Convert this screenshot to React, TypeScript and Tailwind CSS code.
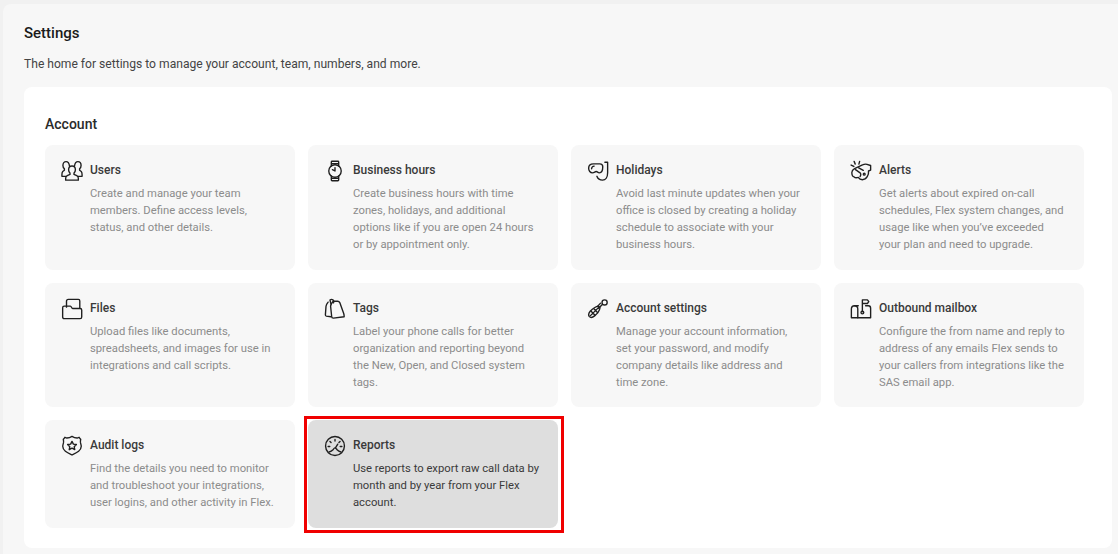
import React from 'react';

const iconClass = 'w-[22px] h-[22px] shrink-0 mt-[-1px] text-[#1f1f1f]';

const Svg: React.FC<{ children: React.ReactNode }> = ({ children }) => (
  <svg viewBox="0 0 24 24" fill="none" stroke="currentColor" strokeWidth={1.5} strokeLinecap="round" strokeLinejoin="round" className={iconClass}>
    {children}
  </svg>
);

const UsersIcon = () => (
  <Svg>
    <path d="M12 6.500c2.300 0 3.700 1.900 3.700 4.200 0 1.500-.6 2.800-1.500 3.600v1.400l3 1.300c1.200.6 1.700 1.500 1.700 2.800v2.200H5.100v-2.200c0-1.300.5-2.200 1.700-2.800l3-1.300v-1.400c-.9-.8-1.500-2.100-1.500-3.600 0-2.200 1.400-4.200 3.700-4.200z" />
    <path d="M9.300 6.800C9 4 7.500 1.800 5.500 1.800 3.500 1.800 2.100 3.700 2.100 6c0 1.500.6 2.800 1.600 3.600v1.500l-1.800 1.400C1.200 13.200 1 14.500 1 16v1.800h4.300" />
    <path d="M14.700 6.800C15 4 16.500 1.800 18.500 1.800c2 0 3.400 1.900 3.400 4.200 0 1.500-.6 2.800-1.600 3.600v1.500l1.800 1.400c.7.700.9 2 .9 3.500v1.800h-4.300" />
  </Svg>
);

const WatchIcon = () => (
  <Svg>
    <circle cx="12" cy="12" r="6.800" />
    <path d="M12 8.300V12l-2.800-1.500" />
    <path d="M8 6.500V2.200c0-.5.400-.8.800-.8h6.400c.4 0 .8.300.8.800v4.300" />
    <path d="M8 17.500v4.300c0 .5.400.8.800.8h6.400c.4 0 .8-.300.8-.800v-4.300" />
    <path d="M8.200 4h7.600M8.200 20h7.600" />
  </Svg>
);

const SnorkelIcon = () => (
  <Svg>
    <path d="M1.800 9c0-3 2.200-4.800 5.200-4.800h7c2 0 3.200 1 3.200 3.200 0 3.400-1.200 6.600-3.800 6.600-1.600 0-2-1.400-3.400-1.400s-2 1.400-4 1.400C3.500 14 1.800 11.800 1.800 9z" />
    <path d="M5 9.500c.1-1.600 1.200-2.700 2.800-2.800" />
    <path d="M19.500 2.500h3V14c0 4.500-2.200 8-5.500 8-2.700 0-5.200-1.500-6.200-4.200" />
  </Svg>
);

const WhistleIcon = () => (
  <Svg>
    <path d="M4.500 1.500l1.200 3M10.500 1.500l-.8 3M1.200 5.500l3 1.500" />
    <path d="M2 13.500c0-2 1.300-3 3-4l8-4c2-.8 4-1.200 5.500-.8L22.500 6v5l-2.300 1c.5 4-2 9.500-6.700 9.500-2 0-3.500-1-4.500-2.500-2 .5-3.500.5-4.500-.5C2.800 18 2 15.800 2 13.500z" />
    <path d="M6 10.500l5 3.500c1 .8 1 2.800 0 4M9.500 8.500l5 2.800" />
    <circle cx="15.500" cy="15.500" r="1" />
  </Svg>
);

const FilesIcon = () => (
  <Svg>
    <path d="M6 10V3.500c0-1.200.8-2 2-2h11c1 0 1.500.7 1.500 1.700V11" />
    <path d="M1.800 10.500c0-1 .7-1.700 1.700-1.700h6.700c1.200 0 1.300 2.700 2.500 2.700h8.200c1 0 1.700.7 1.700 1.700v7.600c0 1-.7 1.700-1.700 1.700H3.500c-1 0-1.700-.7-1.700-1.700z" />
  </Svg>
);

const TagsIcon = () => (
  <Svg>
    <path d="M10 3.500h5c1 0 1.700.5 2.200 1.500l4.300 12c.4 1.200.5 2.700.5 3.500l-11.800 1.500c-1 0-1.800-.6-1.800-1.500L7.200 9c0-1.500 1-3.500 2.800-5.500z" />
    <path d="M7.500 6L6.500 2.200c1-.8 2.200-.9 3.200-.2 1 .7 1.200 2 .6 3.300" />
    <path d="M7.500 20.500l-5-.7c-.6-.1-1-.7-1-1.400L2.200 9c.2-1.600 1.200-3.200 2.300-4.500" />
  </Svg>
);

const WhiskIcon = () => (
  <Svg>
    <circle cx="19.200" cy="4.800" r="2.800" />
    <path d="M17 6.800l-4.300 4.300M14.800 5.600L11.200 9.400" />
    <path d="M12.500 8.800c-3.200.4-6.200 2.600-9 5.700-1.700 2-2.100 4.300-.9 5.800 1.300 1.400 3.600 1 5.700-.8 3-2.600 5.500-5.700 5.900-8.900z" />
    <path d="M4.500 14.500l4 4M7.500 11.800l4.200 4.200M3.500 19.500l9-9" />
  </Svg>
);

const MailboxIcon = () => (
  <Svg>
    <path d="M1.500 21.500V12c0-2 1.600-3.500 3.500-3.500S8.500 10 8.500 12v9.500z" />
    <path d="M5 8.500h4M17 8.500h3c1.500 0 2.500 1.200 2.500 2.800v10.200H8.500" />
    <path d="M13.500 15V2h5.500l1.500 2-1.500 2h-5.500" />
    <circle cx="13.500" cy="15.800" r="1.500" />
  </Svg>
);

const BadgeIcon = () => (
  <Svg>
    <path d="M12 1.500c1.800 1.200 3.500 1.800 5.500 1.800l2.200-.8c.5 1 1 1.700 1.800 2.300-.4 1.500-.5 2.500-.2 3.800.4 1.500.8 2.700.8 3.800 0 4.500-4.500 6.600-10.100 9.300C6.400 19 1.900 16.900 1.900 12.400c0-1.100.4-2.300.8-3.800.3-1.300.2-2.300-.2-3.800.8-.6 1.300-1.300 1.800-2.300l2.200.8c2 0 3.700-.6 5.500-1.800z" />
    <path d="M12 7l1.500 3 3.300.4-2.400 2.300.6 3.300-3-1.600-3 1.600.6-3.300-2.400-2.300 3.300-.4z" />
  </Svg>
);

const GaugeIcon = () => (
  <Svg>
    <circle cx="12" cy="12" r="10.300" />
    <path d="M12 4.800v1.800M6.500 7l1.200 1.200M17.500 7l-1.200 1.200M4.500 12.500h1.800M17.700 12.500h1.800" />
    <path d="M12.500 14l2.500-4" />
    <path d="M5.500 18.500c1.800-.3 3-.9 4.300-2.400.7-1 1.400-2.100 2.200-2.100 1 0 1.600 1.200 2.300 2.100 1.300 1.500 2.500 2.100 4.200 2.400" />
  </Svg>
);

interface Item {
  title: string;
  lines: string[];
  icon: React.ReactNode;
  active?: boolean;
}

const items: Item[] = [
  {
    title: 'Users',
    icon: <UsersIcon />,
    lines: ['Create and manage your team', 'members. Define access levels,', 'status, and other details.'],
  },
  {
    title: 'Business hours',
    icon: <WatchIcon />,
    lines: ['Create business hours with time', 'zones, holidays, and additional', 'options like if you are open 24 hours', 'or by appointment only.'],
  },
  {
    title: 'Holidays',
    icon: <SnorkelIcon />,
    lines: ['Avoid last minute updates when your', 'office is closed by creating a holiday', 'schedule to associate with your', 'business hours.'],
  },
  {
    title: 'Alerts',
    icon: <WhistleIcon />,
    lines: ['Get alerts about expired on-call', 'schedules, Flex system changes, and', 'usage like when you’ve exceeded', 'your plan and need to upgrade.'],
  },
  {
    title: 'Files',
    icon: <FilesIcon />,
    lines: ['Upload files like documents,', 'spreadsheets, and images for use in', 'integrations and call scripts.'],
  },
  {
    title: 'Tags',
    icon: <TagsIcon />,
    lines: ['Label your phone calls for better', 'organization and reporting beyond', 'the New, Open, and Closed system', 'tags.'],
  },
  {
    title: 'Account settings',
    icon: <WhiskIcon />,
    lines: ['Manage your account information,', 'set your password, and modify', 'company details like address and', 'time zone.'],
  },
  {
    title: 'Outbound mailbox',
    icon: <MailboxIcon />,
    lines: ['Configure the from name and reply to', 'address of any emails Flex sends to', 'your callers from integrations like the', 'SAS email app.'],
  },
  {
    title: 'Audit logs',
    icon: <BadgeIcon />,
    lines: ['Find the details you need to monitor', 'and troubleshoot your integrations,', 'user logins, and other activity in Flex.'],
  },
  {
    title: 'Reports',
    icon: <GaugeIcon />,
    active: true,
    lines: ['Use reports to export raw call data by', 'month and by year from your Flex', 'account.'],
  },
];

const SettingCard: React.FC<{ item: Item }> = ({ item }) => (
  <div className={`relative flex gap-[7px] rounded-lg pl-[16px] pr-2 pt-[16px] ${item.active ? 'bg-[#dedede]' : 'bg-[#f7f7f7]'}`}>
    {item.icon}
    <div className="min-w-0">
      <div className="text-[12px] leading-[18px] font-medium text-[#3a3a3a]">{item.title}</div>
      <div className={`mt-[6px] text-[11.25px] leading-[17px] ${item.active ? 'text-[#3a3a3a]' : 'text-[#8c8c8c]'}`}>
        {item.lines.map((line) => (
          <div key={line} className="whitespace-nowrap">
            {line}
          </div>
        ))}
      </div>
    </div>
    {item.active && <div className="absolute -left-[4px] -right-[6px] -top-[4px] -bottom-[5px] border-[3px] border-[#f00000]" />}
  </div>
);

export default function App() {
  return (
    <div className="h-[554px] w-[1118px] overflow-hidden bg-[#f1f1f1] pt-[4px] pl-[3px] font-['Roboto',sans-serif]">
      <div className="h-full rounded-tl-lg bg-[#f7f7f7] pl-[21px] pr-[6px] pt-[19px]">
        <h1 className="text-[15px] leading-[20px] font-medium text-[#1a1a1a]">Settings</h1>
        <p className="mt-[12px] text-[12.1px] leading-[18px] text-[#444444]">
          The home for settings to manage your account, team, numbers, and more.
        </p>
        <div className="mt-[14px] h-[461px] rounded-lg bg-white pl-[21px] pt-[28px]">
          <h2 className="text-[14px] leading-[18px] font-medium text-[#2a2a2a]">Account</h2>
          <div className="mt-[12px] grid grid-cols-[repeat(4,250px)] grid-rows-[125px_124px_108px] gap-[13px]">
            {items.map((item) => (
              <SettingCard key={item.title} item={item} />
            ))}
          </div>
        </div>
      </div>
    </div>
  );
}
